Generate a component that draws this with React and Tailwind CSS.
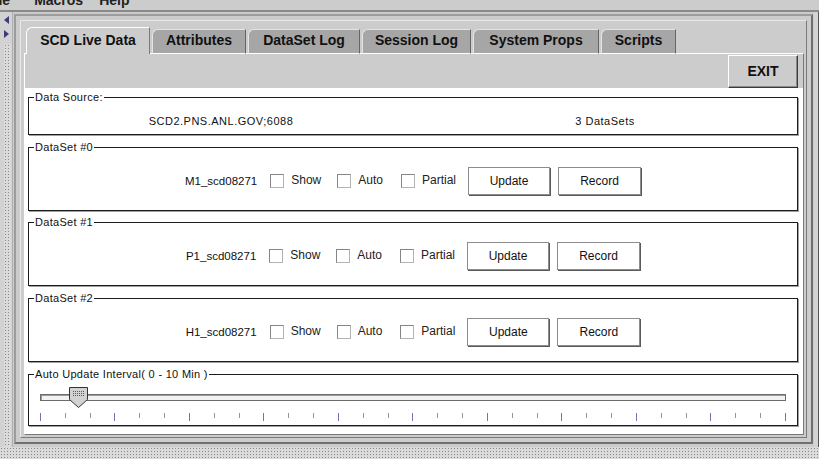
import React from "react";

const tabs = [
  { label: "SCD Live Data", w: "w-[124px]", active: true },
  { label: "Attributes", w: "w-[94px]" },
  { label: "DataSet Log", w: "w-[112px]" },
  { label: "Session Log", w: "w-[109px]" },
  { label: "System Props", w: "w-[126px]" },
  { label: "Scripts", w: "w-[75px]" },
];

const dataSets = [
  { title: "DataSet #0", name: "M1_scd08271", gap: "mt-[12px]" },
  { title: "DataSet #1", name: "P1_scd08271", gap: "mt-[11px]" },
  { title: "DataSet #2", name: "H1_scd08271", gap: "mt-[12px]" },
];

const ticks = Array.from({ length: 31 }, (_, i) => i);

function Box({ title, className, children }) {
  return (
    <div className={`ml-[3px] mr-[5px] border border-[#1c1c1c] shadow-[1px_1px_0_#a0a0a0] ${className}`}>
      <div className="-mt-[7px] ml-[5px] w-fit bg-white px-[1px] text-[11px] leading-[12px] tracking-[0.3px] text-[#111]">
        {title}
      </div>
      {children}
    </div>
  );
}

function Check({ label, className }) {
  return (
    <>
      <span className={`h-[14px] w-[14px] bg-white border border-[#858585] border-b-[#b4b4b4] border-r-[#b4b4b4] ${className}`} />
      <span className="ml-[7px] -mt-[3px] text-[12px] leading-[14px] text-[#222]">{label}</span>
    </>
  );
}

function Btn({ children, className }) {
  return (
    <span className={`flex h-[28px] items-center justify-center bg-white border border-[#8c8c8c] shadow-[1px_1px_0_#5a5a5a] text-[12px] text-[#111] ${className}`}>
      {children}
    </span>
  );
}

function Thumb() {
  return (
    <svg width="19" height="21" viewBox="0 0 19 21">
      <defs>
        <pattern id="thumbdots" width="2" height="2" patternUnits="userSpaceOnUse">
          <rect width="1" height="1" fill="#5a5a5a" />
        </pattern>
      </defs>
      <path d="M0.5 0.5H18.5V12.5L9.5 20.5L0.5 12.5Z" fill="#d2d2d2" stroke="#333" />
      <rect x="3" y="3" width="13" height="7" fill="url(#thumbdots)" />
    </svg>
  );
}

export default function App() {
  return (
    <div className="flex h-[459px] w-[819px] flex-col overflow-hidden bg-[#cccccc] font-['Liberation_Sans',Arial,sans-serif]">
      {/* menu bar, mostly scrolled off */}
      <div className="h-[12px] overflow-hidden border-b-2 border-[#8a8a8a]">
        <div className="-mt-[8px] flex text-[14px] font-bold leading-[16px] text-[#222]">
          <span className="-ml-[14px]">File</span>
          <span className="ml-[24px]">Macros</span>
          <span className="ml-[16px]">Help</span>
        </div>
      </div>

      <div className="flex min-h-0 flex-1">
        {/* split pane divider */}
        <div className="flex w-[13px] flex-col border-r border-[#b0b0b0] bg-[#d2d2d2] pl-[4px]">
          <span className="mt-[4px] h-0 w-0 border-y-[4px] border-r-[5px] border-y-transparent border-r-[#3c3c7a]" />
          <span className="mt-[6px] h-0 w-0 border-y-[4px] border-l-[5px] border-y-transparent border-l-[#3c3c7a]" />
          <div className="mt-[6px] w-[7px] flex-1 bg-[#dadada] bg-[radial-gradient(#8a8a8a_0.7px,transparent_0.9px)] bg-[length:3px_3px]" />
        </div>

        <div className="flex min-w-0 flex-1 flex-col pb-[3px] pl-[1px] pr-[1px] pt-[2px]">
          <div className="flex flex-1 flex-col border-2 border-[#9c9c9c] border-b-[#707070] border-r-[#707070] p-[4px]">
            <div className="flex flex-1 flex-col border border-[#7a7a7a] border-l-[#e8e8e8] border-t-[#e8e8e8] pb-[2px] pl-[3px] pr-[2px] pt-[6px]">
              {/* tabs */}
              <div className="relative z-10 -mb-px ml-[2px] flex h-[27px] items-end gap-[2px]">
                {tabs.map((t) =>
                  t.active ? (
                    <div
                      key={t.label}
                      className={`${t.w} flex h-[27px] items-start justify-center rounded-tl-[6px] border-l border-r border-t border-l-white border-r-[#7a7a7a] border-t-white bg-[#cccccc] pt-[4px] text-[14px] font-bold leading-[16px] text-[#111]`}
                    >
                      {t.label}
                    </div>
                  ) : (
                    <div
                      key={t.label}
                      className={`${t.w} flex h-[25px] items-start justify-center rounded-tl-[6px] border-b border-l border-r border-t border-b-white border-l-[#e4e4e4] border-r-[#666] border-t-[#e4e4e4] bg-[#a6a6a6] pt-[2px] text-[14px] font-bold leading-[16px] text-[#111]`}
                    >
                      {t.label}
                    </div>
                  )
                )}
              </div>

              {/* tab content */}
              <div className="flex flex-1 flex-col border border-[#7a7a7a] border-l-white border-t-white">
                <div className="flex justify-end">
                  <div className="mr-[5px] mt-[1px] flex h-[33px] w-[70px] items-center justify-center border border-[#3a3a3a] border-l-white border-t-white shadow-[inset_-1px_-1px_0_#8a8a8a] text-[14px] font-bold text-[#111]">
                    EXIT
                  </div>
                </div>

                <div className="flex-1 bg-white pt-[9px]">
                  <Box title="Data Source:" className="h-[38px]">
                    <div className="mt-[12px] grid grid-cols-2 text-center text-[11px] leading-[12px] tracking-[0.5px] text-[#111]">
                      <span>SCD2.PNS.ANL.GOV;6088</span>
                      <span>3 DataSets</span>
                    </div>
                  </Box>

                  {dataSets.map((d) => (
                    <Box key={d.title} title={d.title} className={`h-[64px] ${d.gap}`}>
                      <div className="mt-[14px] flex items-center justify-center">
                        <span className="text-[11.5px] leading-[14px] text-[#111]">{d.name}</span>
                        <Check label="Show" className="ml-[13px]" />
                        <Check label="Auto" className="ml-[16px]" />
                        <Check label="Partial" className="ml-[18px]" />
                        <Btn className="ml-[12px] w-[82px]">Update</Btn>
                        <Btn className="ml-[8px] w-[83px]">Record</Btn>
                      </div>
                    </Box>
                  ))}

                  <Box title="Auto Update Interval( 0 - 10 Min )" className="mt-[12px] h-[52px]">
                    <div className="relative mt-[6px] h-[22px] pt-[8px]">
                      <div className="mx-[11px] h-[7px] border border-[#6c6c6c] bg-[#f2f2f2] shadow-[inset_1px_1px_0_#9a9a9a]" />
                      <div className="absolute left-[40px] top-[1px]">
                        <Thumb />
                      </div>
                    </div>
                    <div className="mx-[11px] mt-[5px] flex items-start justify-between">
                      {ticks.map((i) =>
                        i % 3 === 0 ? (
                          <span key={i} className="h-[8px] w-px bg-[#7272b4]" />
                        ) : (
                          <span key={i} className="h-[5px] w-px bg-[#969696]" />
                        )
                      )}
                    </div>
                  </Box>
                </div>
              </div>
            </div>
          </div>
        </div>

        <div className="w-[5px] border-r border-[#555] bg-[#d4d4d4]" />
      </div>

      {/* bottom splitter */}
      <div className="h-[12px] bg-[#dadada] bg-[radial-gradient(#8a8a8a_0.7px,transparent_0.9px)] bg-[length:3px_3px]" />
    </div>
  );
}
